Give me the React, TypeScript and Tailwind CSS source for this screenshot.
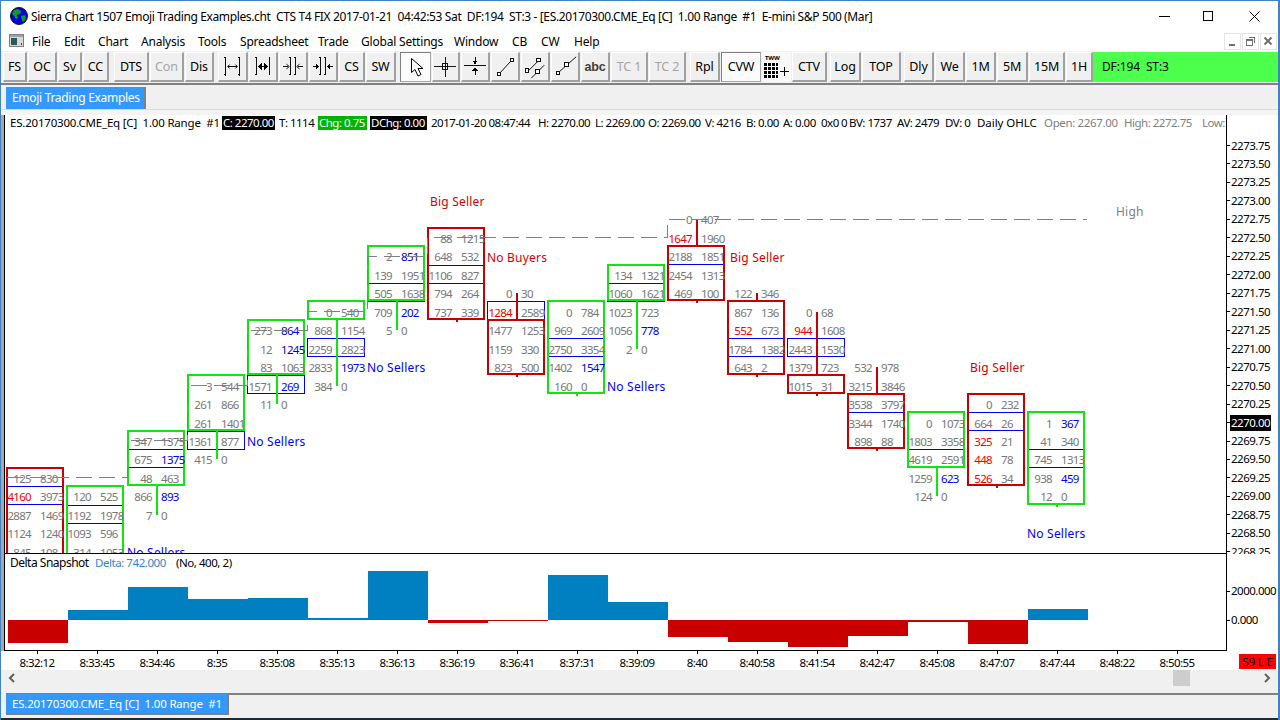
import type { ReactNode } from "react";

const rowY = (i: number) => 145.5 + 18.47 * i;

// rows start at index `top`, prefix r / b colours a number
const columns = [
  { up: false, top: 18, box: [18, 23], blue: 19, rows: ["125 830", "r4160 3973", "2887 1469", "1124 1240", "845 108"] },
  { up: true, top: 19, box: [19, 23], blue: 20, rows: ["120 525", "1192 1978", "1093 596", "314 1053"] },
  { up: true, top: 16, box: [16, 18], blue: 17, rows: ["347 1375", "675 b1375", "48 463", "866 b893", "7 0"] },
  { up: true, top: 13, box: [13, 15], blue: 16, rows: ["3 544", "261 866", "261 1401", "1361 877", "415 0"] },
  { up: true, top: 10, box: [10, 12], blue: 13, rows: ["273 b864", "12 b1245", "83 1063", "1571 b269", "11 0"] },
  { up: true, top: 9, box: [9, 9], blue: 11, rows: ["0 540", "868 1154", "2259 2823", "2833 b1973", "384 0"] },
  { up: true, top: 6, box: [6, 8], blue: 8, rows: ["2 b851", "139 1951", "505 1638", "709 b202", "5 0"] },
  { up: false, top: 5, box: [5, 9], blue: 7, rows: ["88 1215", "648 532", "1106 827", "794 264", "737 339"] },
  { up: false, top: 8, box: [10, 12], blue: 9, rows: ["0 30", "r1284 2589", "1477 1253", "1159 330", "823 500"] },
  { up: true, top: 9, box: [9, 13], blue: 11, rows: ["0 784", "969 2609", "2750 3354", "1402 b1547", "160 0"] },
  { up: true, top: 7, box: [7, 8], blue: 8, rows: ["134 1321", "1060 1621", "1023 723", "1056 b778", "2 0"] },
  { up: false, top: 4, box: [6, 8], blue: 6, rows: ["0 407", "r1647 1960", "2188 1851", "2454 1313", "469 100"] },
  { up: false, top: 8, box: [9, 12], blue: 11, rows: ["122 346", "867 136", "r552 673", "1784 1382", "643 2"] },
  { up: false, top: 9, box: [13, 13], blue: 11, rows: ["0 68", "r944 1608", "2443 1530", "1379 723", "1015 31"] },
  { up: false, top: 12, box: [14, 16], blue: 14, rows: ["532 978", "3215 3846", "3538 3797", "3344 1740", "898 88"] },
  { up: true, top: 15, box: [15, 17], blue: 17, rows: ["0 1073", "1803 3358", "4619 2591", "1259 b623", "124 0"] },
  { up: false, top: 14, box: [14, 18], blue: 15, rows: ["0 232", "664 26", "r325 21", "r448 78", "r526 34"] },
  { up: true, top: 15, box: [15, 19], blue: 17, rows: ["1 b367", "41 340", "745 1313", "938 b459", "12 0"] },
];

const notes = [
  { t: "Big Seller", x: 430, y: 201, c: "text-[#d40000]" },
  { t: "No Buyers", x: 487, y: 257, c: "text-[#d40000]" },
  { t: "Big Seller", x: 730, y: 257, c: "text-[#d40000]" },
  { t: "Big Seller", x: 970, y: 367, c: "text-[#d40000]" },
  { t: "No Sellers", x: 127, y: 552, c: "text-[#0000ff]" },
  { t: "No Sellers", x: 247, y: 441, c: "text-[#0000ff]" },
  { t: "No Sellers", x: 367, y: 367, c: "text-[#0000ff]" },
  { t: "No Sellers", x: 607, y: 386, c: "text-[#0000ff]" },
  { t: "No Sellers", x: 1027, y: 533, c: "text-[#0000ff]" },
  { t: "High", x: 1116, y: 211, c: "text-[#808080]" },
];

const priceLabels = ["2273.75", "2273.50", "2273.25", "2273.00", "2272.75", "2272.50", "2272.25", "2272.00", "2271.75", "2271.50", "2271.25", "2271.00", "2270.75", "2270.50", "2270.25", "2270.00", "2269.75", "2269.50", "2269.25", "2269.00", "2268.75", "2268.50", "2268.25"];

const deltas = [-23, 10, 33, 21, 22, 2, 49, -3, -1, 45, 18, -17, -22, -27, -16, -2, -24, 11];

const times = ["8:32:12", "8:33:45", "8:34:46", "8:35", "8:35:08", "8:35:13", "8:36:13", "8:36:19", "8:36:41", "8:37:31", "8:39:09", "8:40", "8:40:58", "8:41:54", "8:42:47", "8:45:08", "8:47:07", "8:47:44", "8:48:22", "8:50:55"];

const menus = [
  { t: "File", c: "w-[32px]" },
  { t: "Edit", c: "w-[34px]" },
  { t: "Chart", c: "w-[43px]" },
  { t: "Analysis", c: "w-[57px]" },
  { t: "Tools", c: "w-[42px]" },
  { t: "Spreadsheet", c: "w-[78px]" },
  { t: "Trade", c: "w-[43px]" },
  { t: "Global Settings", c: "w-[93px]" },
  { t: "Window", c: "w-[58px]" },
  { t: "CB", c: "w-[29px]" },
  { t: "CW", c: "w-[33px]" },
  { t: "Help", c: "w-[40px]" },
];

const tone = (v: string) =>
  v[0] === "r" ? "text-[#f00000]" : v[0] === "b" ? "text-[#0000f0]" : "text-[#787878]";

const Column = ({ col, index }: { col: (typeof columns)[number]; index: number }) => {
  const x = index < 2 ? 1 + 60 * index : 2 + 60 * index; // plot-relative left edge of the box
  const centre = x + 29.5;
  const boxTop = Math.round(rowY(col.box[0] - 0.5)) - 2 - 115;
  const boxBottom = Math.round(rowY(col.box[1] + 0.5)) - 1 - 115;
  const lastRow = col.top + col.rows.length - 1;
  const wickTop = Math.round(rowY(col.top)) - 115;
  const wickBottom = lastRow > col.box[1] ? Math.round(rowY(lastRow)) - 115 : boxBottom + 2;
  const blueTop = Math.round(rowY(col.blue - 0.5)) - 1 - 115;
  const wickColour = col.up ? "bg-[#0fe60f]" : "bg-[#c80000]";
  const boxColour = col.up ? "border-[#0fe60f]" : "border-[#c80000]";
  return (
    <>
      <div
        className="absolute border border-[#0000f0]"
        style={{ left: x, width: 58, top: blueTop, height: 19 }}
      />
      {col.top < col.box[0] && (
        <div
          className={`absolute w-[2px] ${wickColour}`}
          style={{ left: centre - 1, top: wickTop, height: boxTop - wickTop }}
        />
      )}
      <div
        className={`absolute w-[2px] ${wickColour}`}
        style={{ left: centre - 1, top: boxBottom, height: wickBottom - boxBottom }}
      />
      <div
        className={`absolute border-2 bg-transparent ${boxColour}`}
        style={{ left: x, width: 58, top: boxTop, height: boxBottom - boxTop }}
      />
      {col.rows.map((row, r) => {
        const [a, b] = row.split(" ");
        const y = Math.round(rowY(col.top + r)) - 115 - 6;
        return (
          <div key={r} className="text-[11.5px] tracking-[-0.7px]">
            <span
              className={`absolute text-right leading-[14px] ${tone(a)}`}
              style={{ left: centre - 44.5, width: 40, top: y }}
            >
              {a.replace(/^[rb]/, "")}
            </span>
            <span
              className={`absolute leading-[14px] ${tone(b)}`}
              style={{ left: centre + 4.5, top: y }}
            >
              {b.replace(/^[rb]/, "")}
            </span>
          </div>
        );
      })}
    </>
  );
};

const Btn = ({ w, label, off, down, children }: { w: string; label?: string; off?: boolean; down?: boolean; children?: ReactNode }) => (
  <div
    className={`${w} h-[30px] flex items-center justify-center box-border border ${
      down
        ? "bg-[#fbfbfb] border-[#a8a8a8] border-t-[#808080] border-l-[#808080]"
        : "bg-[#f0f0f0] border-t-white border-l-white border-r-[#a0a0a0] border-b-[#a0a0a0] border-r-2 border-b-2"
    } ${off ? "text-[#a6a6a6]" : "text-black"}`}
  >
    {label}
    {children}
  </div>
);

const Ico = ({ children }: { children: ReactNode }) => (
  <svg width="28" height="28" viewBox="0 0 28 28" fill="none" stroke="black" strokeWidth="1" shapeRendering="crispEdges">
    {children}
  </svg>
);

const Arrowhead = ({ d }: { d: string }) => <path d={d} fill="black" stroke="none" />;

const Square = ({ x, y }: { x: number; y: number }) => <rect x={x} y={y} width="4" height="4" fill="white" stroke="black" />;

const Line = ({ d }: { d: string }) => <path d={d} stroke="black" shapeRendering="geometricPrecision" />;

export default function App() {
  return (
    <div className="relative w-[1280px] h-[720px] overflow-hidden box-border flex flex-col bg-[#f0f0f0] border-t border-l border-r-2 border-[#3f83c4] text-[11.5px] tracking-[-0.14px] leading-[14px] text-black font-['Noto_Sans',sans-serif]">
      {/* title bar */}
      <div className="h-[30px] bg-white flex items-center shrink-0">
        <svg className="ml-[9px] mr-[3px]" width="18" height="18" viewBox="0 0 18 18">
          <circle cx="9" cy="9" r="8.5" fill="#0000e6" stroke="#101020" />
          <path d="M4 3l4-1 3 2-1 3-3 1 1 3-2 1-2-3-2-2z" fill="#109a20" />
          <path d="M11 9l4-1 1 3-2 4-2-1z" fill="#109a20" />
        </svg>
        <span className="whitespace-pre pt-[1px] text-[12px] tracking-[-0.37px]">Sierra Chart 1507 Emoji Trading Examples.cht  CTS T4 FIX 2017-01-21  04:42:53 Sat  DF:194  ST:3 - [ES.20170300.CME_Eq [C]  1.00 Range  #1  E-mini S&P 500 (Mar]</span>
        <div className="ml-auto flex items-center mr-[18px]">
          <svg width="11" height="11" viewBox="0 0 11 11" shapeRendering="crispEdges"><path d="M0 5.5h11" stroke="black" /></svg>
          <svg className="ml-[32px]" width="11" height="11" viewBox="0 0 11 11" shapeRendering="crispEdges"><rect x="1.5" y="0.5" width="9" height="9" fill="none" stroke="black" /></svg>
          <svg className="ml-[36px]" width="11" height="11" viewBox="0 0 11 11"><path d="M0.5 0.5l10 10M10.5 0.5l-10 10" stroke="black" /></svg>
        </div>
      </div>

      {/* menu */}
      <div className="h-[20px] bg-white flex items-end pb-[2px] shrink-0 relative text-[12px] tracking-[-0.2px]">
        <svg className="ml-[8px] mr-[8px] self-center" width="15" height="13" viewBox="0 0 15 13" shapeRendering="crispEdges">
          <rect x="0.5" y="0.5" width="14" height="12" fill="#d8d8d8" stroke="#808080" />
          <rect x="1" y="1" width="13" height="2" fill="#a0a0a0" />
          <rect x="2" y="4" width="6" height="7" fill="#2a5a5a" />
          <rect x="12" y="9" width="1" height="2" fill="#404040" />
        </svg>
        {menus.map((m) => (
          <span key={m.t} className={`${m.c} whitespace-nowrap`}>{m.t}</span>
        ))}
        <div className="ml-auto flex mr-[1px] gap-[1px] h-[17px] self-start mt-[2px]">
          {[0, 1, 2].map((i) => (
            <div key={i} className="w-[17px] border border-[#e4e4e4] bg-white flex items-center justify-center">
              <svg width="11" height="11" viewBox="0 0 11 11" shapeRendering="crispEdges">
                {i === 0 && <rect x="2" y="8" width="6" height="2" fill="#707070" />}
                {i === 1 && <path d="M3.5 1.5h6v5M1.5 3.5h6v6h-6zM1.5 4.5h6" fill="none" stroke="#707070" />}
                {i === 2 && <path d="M1.5 1.5l7 7M8.5 1.5l-7 7" fill="none" stroke="#707070" strokeWidth="2" shapeRendering="geometricPrecision" />}
              </svg>
            </div>
          ))}
        </div>
      </div>

      {/* toolbar */}
      <div className="h-[32px] flex pt-[1px] pl-[2px] shrink-0 bg-[#f0f0f0] text-[12.5px]">
        <div className="flex gap-[1px]">
          <Btn w="w-[24px]" label="FS" />
          <Btn w="w-[29px]" label="OC" />
          <Btn w="w-[24px]" label="Sv" />
          <Btn w="w-[26px]" label="CC" />
        </div>
        <div className="flex gap-[1px] ml-[5px]">
          <Btn w="w-[35px]" label="DTS" />
          <Btn w="w-[34px]" label="Con" off />
          <Btn w="w-[29px]" label="Dis" />
        </div>
        <div className="flex gap-[1px] ml-[4px]">
          <Btn w="w-[30px]">
            <Ico>
              <path d="M6.5 4v19M5 4h2M5 22h2M21.5 4v19M20 4h2M20 22h2M9 13.5h10" />
              <Line d="M11 11.5l-2 2 2 2M17 11.5l2 2-2 2" />
            </Ico>
          </Btn>
          <Btn w="w-[29px]">
            <Ico>
              <path d="M6.5 4v19M5 4h2M5 22h2M21.5 4v19M20 4h2M20 22h2M9 13.5h10" />
              <Arrowhead d="M8.5 13.5l4-3.5v7zM19.5 13.5l-4-3.5v7z" />
            </Ico>
          </Btn>
          <Btn w="w-[29px]">
            <Ico>
              <path d="M11.5 4v19M10 4h2M10 22h2M16.5 4v19M15 4h2M15 22h2M3 13.5h6M19 13.5h6" />
              <Line d="M7 11l3 2.5-3 2.5M21 11l-3 2.5 3 2.5" />
            </Ico>
          </Btn>
          <Btn w="w-[29px]">
            <Ico>
              <path d="M11.5 4v19M10 4h2M10 22h2M16.5 4v19M15 4h2M15 22h2M3 13.5h6M19 13.5h6" />
              <Arrowhead d="M10 13.5l-4-3.5v7zM18 13.5l4-3.5v7z" />
            </Ico>
          </Btn>
          <Btn w="w-[26px]" label="CS" />
          <Btn w="w-[30px]" label="SW" />
        </div>
        <div className="flex gap-[1px] ml-[4px]">
          <Btn w="w-[31px]" down>
            <svg width="20" height="24" viewBox="0 0 20 24">
              <path d="M5.5 3.5v14l3.5-3 3 6.5 3-1.5-3-6h5z" fill="white" stroke="black" />
            </svg>
          </Btn>
          <Btn w="w-[28px]">
            <Ico>
              <path d="M1 13.5h25M13.5 3v22" />
              <rect x="10.5" y="10.5" width="6" height="6" />
            </Ico>
          </Btn>
          <Btn w="w-[29px]">
            <Ico>
              <path d="M2 12.5h24M14 3v6M14 16v7" />
              <Arrowhead d="M14 11l-3.5-4h7zM14 14l-3.5 4h7z" />
            </Ico>
          </Btn>
          <Btn w="w-[29px]">
            <Ico>
              <Line d="M9 20L20 8" />
              <Square x={5.5} y={19.5} />
              <Square x={19.5} y={4.5} />
            </Ico>
          </Btn>
          <Btn w="w-[29px]">
            <Ico>
              <Line d="M7 18L17 8M10 26L24 12" />
              <Square x={3.5} y={15.5} />
              <Square x={15.5} y={4.5} />
              <Square x={14.5} y={16.5} />
            </Ico>
          </Btn>
          <Btn w="w-[29px]">
            <Ico>
              <Line d="M8 19L26 3" />
              <Square x={4.5} y={18.5} />
              <Square x={13.5} y={9.5} />
            </Ico>
          </Btn>
          <Btn w="w-[29px]"><span className="font-bold text-[#404040] font-['Liberation_Sans',sans-serif]">abc</span></Btn>
          <Btn w="w-[37px]" label="TC 1" off />
          <Btn w="w-[37px]" label="TC 2" off />
        </div>
        <div className="flex gap-[1px] ml-[4px]">
          <Btn w="w-[30px]" label="Rpl" />
          <Btn w="w-[40px]" label="CVW" down />
          <div className="relative w-[29px] h-[30px] bg-[#f8f8f8]">
            <span className="absolute left-[3px] top-[3px] text-[6px] leading-[6px] font-bold">TWW</span>
            <svg className="absolute left-[2px] top-[11px]" width="26" height="16" viewBox="0 0 26 16" shapeRendering="crispEdges">
              <rect x="0" y="0" width="14" height="15" fill="black" />
              <path d="M0 3.5h14M0 7.5h14M0 11.5h14M3.5 0v15M7.5 0v15M11.5 0v15" stroke="white" />
              <path d="M16 8.5h9M20.5 4v9" stroke="black" />
            </svg>
          </div>
          <Btn w="w-[35px]" label="CTV" />
        </div>
        <div className="flex gap-[1px] ml-[3px]">
          <Btn w="w-[31px]" label="Log" />
          <Btn w="w-[39px]" label="TOP" />
        </div>
        <div className="flex gap-[1px] ml-[3px]">
          <Btn w="w-[30px]" label="Dly" />
          <Btn w="w-[30px]" label="We" />
          <Btn w="w-[30px]" label="1M" />
          <Btn w="w-[31px]" label="5M" />
          <Btn w="w-[36px]" label="15M" />
          <Btn w="w-[27px]" label="1H" />
        </div>
        <div className="flex-1 h-[30px] bg-[#4dff4d] pl-[9px] flex items-center whitespace-pre text-[12px]">DF:194  ST:3</div>
      </div>

      <div className="h-[2px] bg-[#808080] shrink-0" />

      {/* chartbook tabs */}
      <div className="h-[25px] shrink-0 pl-[5px] pt-[2px] border-b border-[#dcdcdc]">
        <div className="w-[140px] h-[22px] bg-[#3399ff] text-white text-[12px] tracking-[-0.3px] pl-[6px] flex items-center border-r-2 border-[#808080] whitespace-nowrap">Emoji Trading Examples</div>
      </div>
      <div className="h-[5px] shrink-0 bg-[#f4f4f4]" />

      {/* chart */}
      <div className="flex h-[536px] shrink-0 bg-white">
        <div className="w-[3px] bg-[#a8a8a8]" />
        <div className="w-[1222px] border-l border-black flex flex-col shrink-0">
          <div className="relative h-[439px] border-b border-black overflow-hidden">
            <div className="absolute left-0 top-0 h-[15px] flex items-center whitespace-pre w-full overflow-hidden tracking-[-0.5px]">
              <span className="ml-[5px] w-[212px] shrink-0 tracking-[-0.2px]">ES.20170300.CME_Eq [C]  1.00 Range  #1</span>
              <span className="w-[53px] shrink-0 bg-black text-white pl-[1px]">C: 2270.00</span>
              <span className="ml-[4px] w-[39px] shrink-0">T: 1114</span>
              <span className="w-[49px] shrink-0 bg-[#00b400] text-white pl-[1px]">Chg: 0.75</span>
              <span className="ml-[3px] w-[57px] shrink-0 bg-black text-white pl-[1px]">DChg: 0.00</span>
              <span className="ml-[4px] w-[107px] shrink-0">2017-01-20 08:47:44</span>
              <span className="w-[57px] shrink-0">H: 2270.00</span>
              <span className="w-[53px] shrink-0">L: 2269.00</span>
              <span className="w-[57px] shrink-0">O: 2269.00</span>
              <span className="w-[41px] shrink-0">V: 4216</span>
              <span className="w-[37px] shrink-0">B: 0.00</span>
              <span className="w-[38px] shrink-0">A: 0.00</span>
              <span className="w-[20px] shrink-0">0x0</span>
              <span className="w-[8px] shrink-0">0</span>
              <span className="w-[48px] shrink-0">BV: 1737</span>
              <span className="w-[48px] shrink-0">AV: 2479</span>
              <span className="w-[32px] shrink-0">DV: 0</span>
              <span className="w-[67px] shrink-0 tracking-[-0.05px]">Daily OHLC</span>
              <span className="w-[80px] shrink-0 text-[#808080] tracking-[-0.35px]">Open: 2267.00</span>
              <span className="w-[78px] shrink-0 text-[#808080]">High: 2272.75</span>
              <span className="shrink-0 text-[#808080]">Low:</span>
            </div>
            {columns.map((col, i) => (
              <Column key={i} col={col} index={i} />
            ))}
            {notes.map((n, i) => (
              <span
                key={i}
                className={`absolute whitespace-nowrap leading-[14px] text-[12px] tracking-[0.2px] ${n.c}`}
                style={{ left: n.x - 5, top: n.y - 6 - 115 }}
              >
                {n.t}
              </span>
            ))}
            <svg className="absolute left-0 top-0" width="1221" height="438" fill="none" stroke="#808080">
              <path
                d="M2 362.5H122V325.5H182V270.5H242V215.5H302V196.5H362V141.5H422V122.5H662V104.5H1082"
                strokeDasharray="16 7"
                shapeRendering="crispEdges"
              />
            </svg>
          </div>
          <div className="relative h-[97px] border-b border-black">
            <div className="absolute left-[5px] top-[2px] flex whitespace-nowrap leading-[14px]">
              <span className="w-[85px] text-[12px] tracking-[-0.5px]">Delta Snapshot</span>
              <span className="w-[81px] text-[#2f86cc] tracking-[-0.45px]">Delta: 742.000</span>
              <span className="tracking-[-0.45px]">(No, 400, 2)</span>
            </div>
            <div className="flex pl-[3px]">
              {deltas.map((d, i) => (
                <div key={i} className="w-[60px] h-[96px] flex flex-col">
                  <div className="h-[66px] flex items-end">
                    {d > 0 && <div className="w-full bg-[#0080c0]" style={{ height: d }} />}
                  </div>
                  {d < 0 && <div className="w-full bg-[#c80000]" style={{ height: -d }} />}
                </div>
              ))}
            </div>
          </div>
        </div>
        <div className="flex-1 flex flex-col border-l border-black tracking-[-0.5px]">
          <div className="relative h-[439px] overflow-hidden">
            {priceLabels.map((p, i) => (
              <div key={p} className="absolute left-0 flex items-center h-[14px]" style={{ top: rowY(i) - 122 }}>
                <div className="w-[3px] h-[1px] bg-black" />
                {p === "2270.00" ? (
                  <span className="ml-[0px] px-[1px] bg-black text-white leading-[16px]">{p}</span>
                ) : (
                  <span className="ml-[1px]">{p}</span>
                )}
              </div>
            ))}
          </div>
          <div className="relative h-[97px]">
            <div className="absolute left-0 top-[30px] flex items-center h-[14px]">
              <div className="w-[3px] h-[1px] bg-black" />
              <span className="ml-[1px]">2000.000</span>
            </div>
            <div className="absolute left-0 top-[59px] flex items-center h-[14px]">
              <div className="w-[3px] h-[1px] bg-black" />
              <span className="ml-[1px]">0.000</span>
            </div>
          </div>
        </div>
      </div>

      {/* time axis */}
      <div className="h-[19px] shrink-0 bg-white flex pl-[6px] relative tracking-[-0.55px]">
        {times.map((t) => (
          <div key={t} className="w-[60px] flex flex-col items-center shrink-0">
            <div className="w-[1px] h-[3px] bg-black" />
            <span className="mt-[2px]">{t}</span>
          </div>
        ))}
        <div className="absolute right-[2px] top-[3px] w-[37px] h-[15px] bg-[#ff0000] flex items-center justify-center whitespace-pre tracking-[-0.2px]">59 L E</div>
      </div>

      {/* scrollbar */}
      <div className="h-[16px] shrink-0 flex items-center relative bg-[#f0f0f0]">
        <svg className="ml-[7px]" width="8" height="10" viewBox="0 0 8 10"><path d="M6 1L2 5l4 4" fill="none" stroke="#606060" strokeWidth="2" /></svg>
        <div className="ml-auto mr-[73px] w-[17px] h-[16px] bg-[#cdcdcd]" />
        <svg className="mr-[7px]" width="8" height="10" viewBox="0 0 8 10"><path d="M2 1l4 4-4 4" fill="none" stroke="#606060" strokeWidth="2" /></svg>
      </div>

      {/* bottom tabs */}
      <div className="mt-[7px] h-[23px] shrink-0 flex pl-[5px]">
        <div className="w-[223px] h-[22px] bg-[#3399ff] text-white pl-[6px] flex items-center border-r-2 border-t border-b-2 border-[#808080] whitespace-pre tracking-[-0.2px]">ES.20170300.CME_Eq [C]  1.00 Range  #1</div>
        <div className="flex-1 h-[2px] bg-[#808080]" />
      </div>
      <div className="absolute left-0 right-0 bottom-0 h-[2px] bg-[#1f2a33]" />
    </div>
  );
}
